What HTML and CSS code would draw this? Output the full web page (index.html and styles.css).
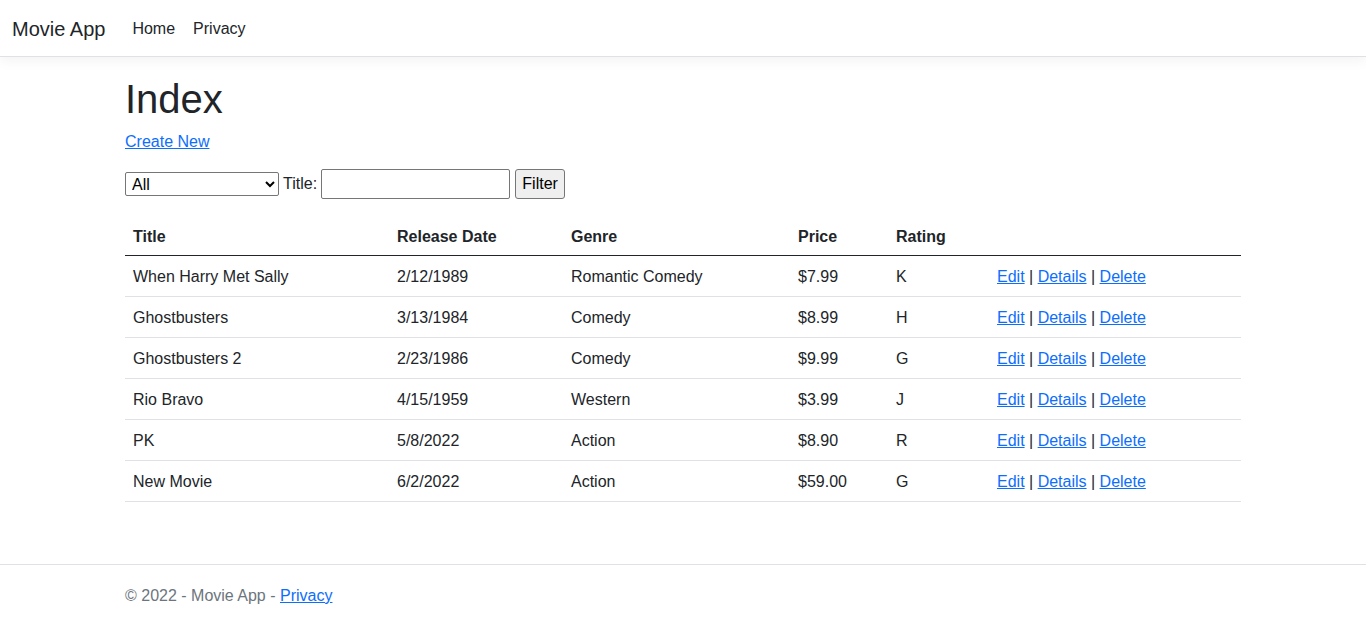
FILE: index.html
```html
<!DOCTYPE html>
<html lang="en">
<head>
<meta charset="utf-8">
<title>Index - Movie App</title>
<link rel="stylesheet" href="styles.css">
</head>
<body>
<header>
  <nav class="navbar">
    <a class="brand" href="#">Movie App</a>
    <ul class="nav">
      <li><a class="nav-link" href="#">Home</a></li>
      <li><a class="nav-link" href="#">Privacy</a></li>
    </ul>
  </nav>
</header>
<div class="container main">
  <h1>Index</h1>
  <p class="create"><a href="#">Create New</a></p>
  <form>
    <p class="filter">
      <select class="genre">
        <option>All</option>
        <option>Action</option>
        <option>Comedy</option>
        <option>Romantic Comedy</option>
        <option>Western</option>
      </select>
      Title: <input type="text" class="title-input">
      <input type="submit" value="Filter" class="filter-btn">
    </p>
  </form>
  <table class="table">
    <colgroup>
      <col class="c1"><col class="c2"><col class="c3"><col class="c4"><col class="c5"><col>
    </colgroup>
    <thead>
      <tr><th>Title</th><th>Release Date</th><th>Genre</th><th>Price</th><th>Rating</th><th></th></tr>
    </thead>
    <tbody>
      <tr><td>When Harry Met Sally</td><td>2/12/1989</td><td>Romantic Comedy</td><td>$7.99</td><td>K</td><td><a href="#">Edit</a> | <a href="#">Details</a> | <a href="#">Delete</a></td></tr>
      <tr><td>Ghostbusters</td><td>3/13/1984</td><td>Comedy</td><td>$8.99</td><td>H</td><td><a href="#">Edit</a> | <a href="#">Details</a> | <a href="#">Delete</a></td></tr>
      <tr><td>Ghostbusters 2</td><td>2/23/1986</td><td>Comedy</td><td>$9.99</td><td>G</td><td><a href="#">Edit</a> | <a href="#">Details</a> | <a href="#">Delete</a></td></tr>
      <tr><td>Rio Bravo</td><td>4/15/1959</td><td>Western</td><td>$3.99</td><td>J</td><td><a href="#">Edit</a> | <a href="#">Details</a> | <a href="#">Delete</a></td></tr>
      <tr><td>PK</td><td>5/8/2022</td><td>Action</td><td>$8.90</td><td>R</td><td><a href="#">Edit</a> | <a href="#">Details</a> | <a href="#">Delete</a></td></tr>
      <tr><td>New Movie</td><td>6/2/2022</td><td>Action</td><td>$59.00</td><td>G</td><td><a href="#">Edit</a> | <a href="#">Details</a> | <a href="#">Delete</a></td></tr>
    </tbody>
  </table>
</div>
<footer class="footer">
  <div class="container">&copy; 2022 - Movie App - <a href="#">Privacy</a></div>
</footer>
</body>
</html>
```
FILE: styles.css
```css
* { box-sizing: border-box; }
html { font-size: 16px; }
body {
  margin: 0;
  font-family: "Liberation Sans", Arial, sans-serif;
  font-size: 16px;
  line-height: 1.5;
  color: #212529;
  background: #fff;
  min-height: 100vh;
  display: flex;
  flex-direction: column;
}
a { color: #0d6efd; text-decoration: underline; }

.navbar {
  display: flex;
  align-items: center;
  padding: 8px 12px;
  background: #fff;
  border-bottom: 1px solid #dee2e6;
  box-shadow: 0 .25rem .75rem rgba(0, 0, 0, .05);
  margin-bottom: 16px;
}
.brand {
  font-size: 20px;
  line-height: 30px;
  padding: 6px 0 4px;
  margin-right: 19px;
  color: #212529;
  text-decoration: none;
  white-space: nowrap;
}
.nav {
  display: flex;
  list-style: none;
  margin: 0;
  padding: 0;
}
.nav li + li { margin-left: 2px; }
.nav-link {
  display: block;
  padding: 9px 8px 7px;
  color: #212529;
  text-decoration: none;
}

.container {
  width: 1140px;
  margin: 0 auto;
  padding: 0 12px;
}
.main { padding-bottom: 16px; }

h1 {
  font-size: 40px;
  font-weight: 500;
  line-height: 1.2;
  margin: 0 0 7px;
  padding-top: 2px;
}
p { margin: 0 0 16px; }
.create { margin-bottom: 15px; }

.filter {
  display: flex;
  align-items: center;
  gap: 4px;
  height: 30px;
}
.filter select,
.filter input {
  font-family: inherit;
  font-size: 16px;
  line-height: 22px;
  color: #000;
  margin: 0;
}
.genre {
  width: 154px;
  height: 24px;
  border: 1px solid #767676;
  border-radius: 2px;
  background: #fff;
  padding: 0 2px;
}
.title-input {
  width: 189px;
  height: 30px;
  border: 1px solid #767676;
  border-radius: 2px;
  padding: 1px 2px;
  background: #fff;
}
.filter-btn {
  width: 50px;
  height: 30px;
  border: 1px solid #767676;
  border-radius: 3px;
  background: #efefef;
  padding: 1px 6px;
  margin-left: 1px !important;
}

.table {
  width: 100%;
  border-collapse: collapse;
  margin-bottom: 16px;
}
.table th, .table td {
  padding: 9px 8px 7px;
  text-align: left;
  vertical-align: top;
  border-bottom: 1px solid #dee2e6;
}
.table th { font-weight: 700; vertical-align: bottom; }
.table thead th {
  padding: 10px 8px 6px;
  border-bottom: 1px solid #212529;
}
.c1 { width: 264px; }
.c2 { width: 174px; }
.c3 { width: 227px; }
.c4 { width: 98px; }
.c5 { width: 101px; }

.footer {
  margin-top: auto;
  border-top: 1px solid #dee2e6;
  line-height: 59px;
  padding-top: 1px;
  height: 61px;
  white-space: nowrap;
  color: #6c757d;
}
```
